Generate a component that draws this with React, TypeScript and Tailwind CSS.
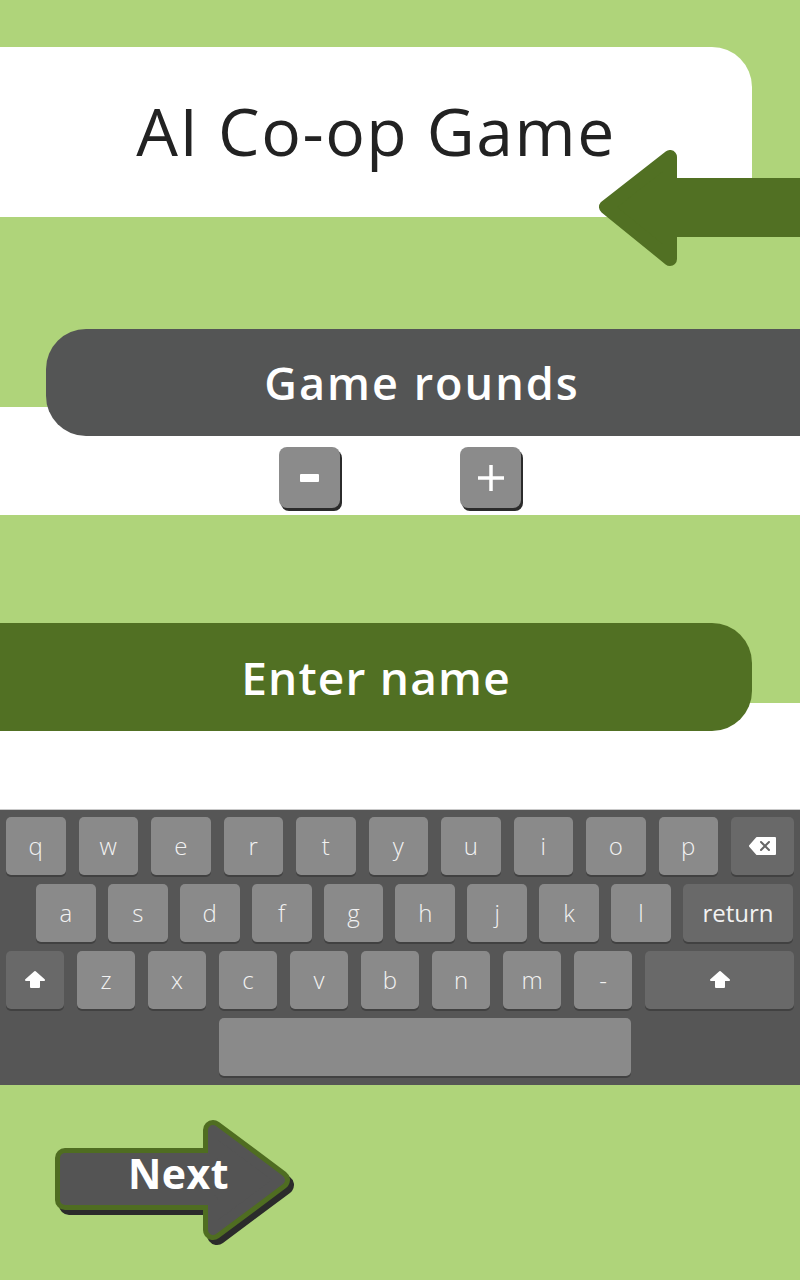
import type { ReactNode } from "react";

const font = { fontFamily: '"Open Sans", "Noto Sans", sans-serif' };

function ShiftIcon() {
  return (
    <svg width="22" height="20" viewBox="0 0 22 20">
      <path d="M11 2 L20 10 L15 10 L15 17 L7 17 L7 10 L2 10 Z" fill="#fff" stroke="#fff" strokeWidth="2" strokeLinejoin="round" />
    </svg>
  );
}

function BackspaceIcon() {
  return (
    <svg width="30" height="20" viewBox="0 0 30 20">
      <path d="M9 2 L27 2 L27 18 L9 18 L2 10 Z" fill="#fff" stroke="#fff" strokeWidth="2" strokeLinejoin="round" />
      <path d="M13 6 L21 14 M21 6 L13 14" stroke="#666" strokeWidth="2" strokeLinecap="round" />
    </svg>
  );
}

function Key({ children, className = "", dark = false }: { children?: ReactNode; className?: string; dark?: boolean }) {
  return (
    <div
      className={`h-[58px] rounded-[5px] flex items-center justify-center text-[24px] font-light text-[#f2f2f2] shadow-[0_2px_0_#414141] ${dark ? "bg-[#696969]" : "bg-[#8a8a8a]"} ${className}`}
    >
      <span className="-mt-[1px]">{children}</span>
    </div>
  );
}

function Keyboard() {
  const row1 = ["q", "w", "e", "r", "t", "y", "u", "i", "o", "p"];
  const row2 = ["a", "s", "d", "f", "g", "h", "j", "k", "l"];
  const row3 = ["z", "x", "c", "v", "b", "n", "m", "-"];
  return (
    <div className="bg-[#565656] border-t border-[#c9c9c9] pt-[7px] pb-[9px] flex flex-col gap-[9px]">
      <div className="flex gap-[13px] px-[6px]">
        {row1.map((k) => (
          <Key key={k} className="flex-1">{k}</Key>
        ))}
        <Key dark className="w-[63px]"><BackspaceIcon /></Key>
      </div>
      <div className="flex gap-[12px] pl-[36px] pr-[7px]">
        {row2.map((k) => (
          <Key key={k} className="flex-1">{k}</Key>
        ))}
        <Key dark className="w-[110px] text-[18px] font-normal">return</Key>
      </div>
      <div className="flex gap-[13px] px-[6px]">
        <Key dark className="w-[58px]"><ShiftIcon /></Key>
        {row3.map((k) => (
          <Key key={k} className="flex-1">{k}</Key>
        ))}
        <Key dark className="w-[149px]"><ShiftIcon /></Key>
      </div>
      <div className="flex pl-[219px]">
        <Key className="w-[412px]" />
      </div>
    </div>
  );
}

function BackArrow() {
  return (
    <svg width="203" height="116" viewBox="0 0 203 116" className="absolute right-0 top-[103px]">
      <rect x="78" y="28" width="125" height="59" fill="#517023" />
      <polygon points="9,57 73,7 73,109" fill="#517023" stroke="#517023" strokeWidth="14" strokeLinejoin="round" />
    </svg>
  );
}

function NextArrow() {
  const pts = "20,43 168,43 168,15 235,65 168,115 168,85 20,85";
  return (
    <div className="relative w-[260px] h-[140px]">
      <svg width="260" height="140" viewBox="0 0 260 140" className="absolute left-0 top-0">
        <polygon points={pts} transform="translate(4,5)" fill="#2b2b2b" stroke="#2b2b2b" strokeWidth="20" strokeLinejoin="round" />
        <polygon points={pts} fill="#4f6d21" stroke="#4f6d21" strokeWidth="20" strokeLinejoin="round" />
        <polygon points={pts} fill="#545454" stroke="#545454" strokeWidth="10" strokeLinejoin="round" />
      </svg>
      <span className="absolute left-[83px] top-[38px] text-[41px] font-bold text-white leading-none tracking-[0.5px]" style={font}>
        Next
      </span>
    </div>
  );
}

export default function App() {
  return (
    <div className="w-[800px] h-[1280px] bg-[#afd47a] overflow-hidden" style={font}>
      <div className="h-[47px]" />

      <div className="relative h-[170px]">
        <div className="w-[752px] h-full bg-white rounded-tr-[40px] flex items-center justify-center">
          <h1 className="text-[66px] font-normal text-[#222] leading-none -mt-[4px] tracking-[1.5px]">AI Co-op Game</h1>
        </div>
        <BackArrow />
      </div>

      <div className="h-[298px] bg-[linear-gradient(to_bottom,#afd47a_190px,#ffffff_190px)] pt-[112px]">
        <div className="ml-[46px] h-[107px] bg-[#545555] rounded-l-[40px] flex items-center justify-center pr-[2px]">
          <span className="text-[45px] font-semibold text-white leading-none tracking-[2px]">Game rounds</span>
        </div>
        <div className="flex justify-center gap-[120px] mt-[11px]">
          <button className="w-[61px] h-[61px] rounded-[8px] bg-[#8b8b8b] shadow-[2px_3px_0_#2b2b2b] flex items-center justify-center">
            <span className="block w-[19px] h-[8px] bg-white rounded-[1px]" />
          </button>
          <button className="w-[61px] h-[61px] rounded-[8px] bg-[#8b8b8b] shadow-[2px_3px_0_#2b2b2b] flex items-center justify-center">
            <svg width="32" height="32" viewBox="0 0 32 32">
              <path d="M16 3 V29 M3 16 H29" stroke="#fff" strokeWidth="3.5" />
            </svg>
          </button>
        </div>
      </div>

      <div className="h-[294px] bg-[linear-gradient(to_bottom,#afd47a_188px,#ffffff_188px)] pt-[108px]">
        <div className="w-[752px] h-[108px] bg-[#517023] rounded-r-[40px] flex items-center justify-center">
          <span className="text-[46px] font-semibold text-white leading-none tracking-[1.2px]">Enter name</span>
        </div>
      </div>

      <Keyboard />

      <div className="pt-[30px] pl-[45px]">
        <NextArrow />
      </div>
    </div>
  );
}
